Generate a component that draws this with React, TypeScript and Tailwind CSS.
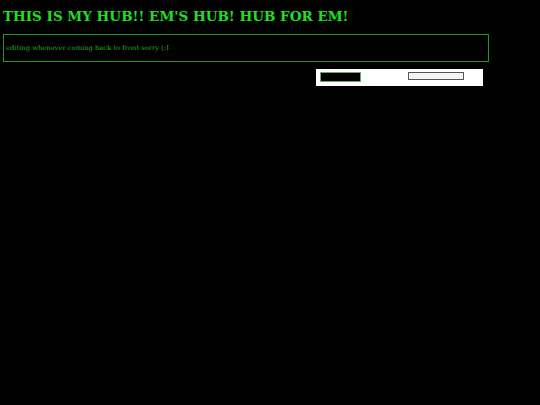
export default function App() {
  return (
    <div className="min-h-[405px] w-full bg-black pt-[8px] pl-[3px] font-['DejaVu_Serif',serif]">
      <h1 className="text-[13.5px] font-bold leading-[16px] text-[#1fe01f]">
        THIS IS MY HUB!! EM'S HUB! HUB FOR EM!
      </h1>
      <div className="mt-[10px] flex h-[28px] w-[486px] items-center border border-[#1f9a1f] pl-[2px]">
        <p className="text-[6.75px] font-medium text-[#26a826]">editing whenever coming back to front sorry (:I</p>
      </div>
      <div className="mt-[7px] flex w-[480px] justify-end">
        <div className="flex h-[17px] w-[167px] items-start bg-white pt-[3px] pl-[4px]">
          <div className="h-[10px] w-[41px] border border-[#6aa86a] bg-black" />
          <div className="ml-[47px] h-[8px] w-[56px] border border-[#555] bg-[#f4f4f4]" />
        </div>
      </div>
    </div>
  );
}
